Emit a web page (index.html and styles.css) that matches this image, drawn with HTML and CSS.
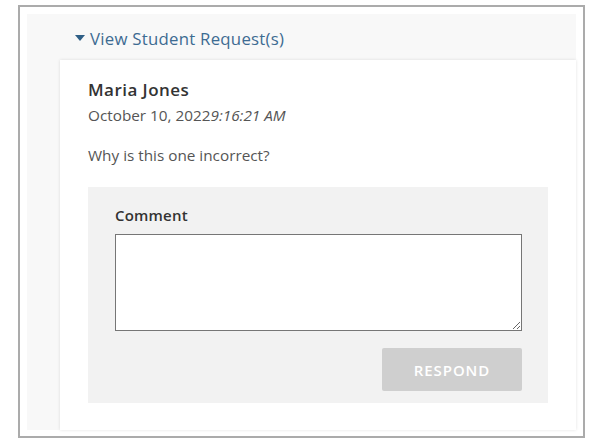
FILE: index.html
```html
<!DOCTYPE html>
<html>
<head>
<meta charset="utf-8">
<link rel="stylesheet" href="styles.css">
</head>
<body>
<div class="frame">
  <div class="container">
    <div class="toggle">
      <svg class="caret" width="10" height="6" viewBox="0 0 10 6"><path d="M0 0H10L5 6Z" fill="#2f5f86"/></svg>
      <span>View Student Request(s)</span>
    </div>
    <div class="card">
      <div class="name">Maria Jones</div>
      <div class="date">October 10, 2022<em>9:16:21 AM</em></div>
      <div class="message">Why is this one incorrect?</div>
      <div class="panel">
        <label class="label">Comment</label>
        <textarea class="comment"></textarea>
        <div class="actions">
          <button class="respond" disabled>RESPOND</button>
        </div>
      </div>
    </div>
  </div>
</div>
</body>
</html>
```
FILE: styles.css
```css
html, body {
  margin: 0;
  padding: 0;
  background: #ffffff;
}
body {
  font-family: "Open Sans", "Noto Sans", sans-serif;
  color: #555;
}
.frame {
  margin: 5px 0 0 18px;
  width: 567px;
  height: 433px;
  border: 2px solid #ababab;
  padding: 7px 7px 6px 7px;
  box-sizing: border-box;
}
.container {
  background: #f8f8f8;
  height: 100%;
  padding: 14px 0 0 33px;
  box-sizing: border-box;
  display: flex;
  flex-direction: column;
}
.toggle {
  display: flex;
  align-items: center;
  gap: 5px;
  padding-left: 15px;
  height: 20px;
  color: #3d6b92;
  font-size: 16.8px;
  letter-spacing: 0.25px;
}
.caret {
  display: block;
}
.card {
  margin-top: 12px;
  flex: 1;
  background: #fff;
  box-shadow: 0 0 3px rgba(0,0,0,0.12);
  padding: 18px 28px 27px 28px;
  display: flex;
  flex-direction: column;
}
.name {
  font-weight: 600;
  font-size: 17px;
  letter-spacing: 0.45px;
  color: #333;
  line-height: 24px;
}
.date {
  font-size: 15.3px;
  line-height: 22px;
  margin-top: 2px;
  color: #555;
}
.date em {
  font-style: italic;
}
.message {
  font-size: 15.3px;
  line-height: 22px;
  margin-top: 18px;
  color: #555;
}
.panel {
  margin-top: 21px;
  background: #f2f2f2;
  padding: 17px 26px 12px 27px;
  display: flex;
  flex-direction: column;
}
.label {
  font-weight: 600;
  font-size: 15px;
  color: #333;
  line-height: 22px;
  letter-spacing: 0.2px;
}
.comment {
  margin: 8px 0 0 0;
  height: 97px;
  border: 1px solid #767676;
  background: #fff;
  box-sizing: border-box;
  resize: vertical;
  font-family: inherit;
}
.actions {
  display: flex;
  justify-content: flex-end;
  margin-top: 17px;
}
.respond {
  width: 140px;
  height: 43px;
  border: none;
  border-radius: 2px;
  background: #cfcfcf;
  color: #fff;
  font-family: "Open Sans", "Noto Sans", sans-serif;
  font-weight: 600;
  font-size: 15px;
  letter-spacing: 0.9px;
}
```
